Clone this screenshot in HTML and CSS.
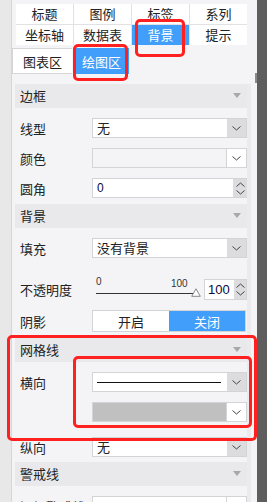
FILE: index.html
```html
<!DOCTYPE html>
<html lang="zh">
<head>
<meta charset="utf-8">
<link rel="stylesheet" href="styles.css">
</head>
<body>
<div class="app">
  <div class="panel">
    <div class="tabs">
      <div class="tab">标题</div>
      <div class="tab">图例</div>
      <div class="tab">标签</div>
      <div class="tab">系列</div>
      <div class="tab">坐标轴</div>
      <div class="tab">数据表</div>
      <div class="tab active">背景</div>
      <div class="tab">提示</div>
    </div>
    <div class="subtabs">
      <div class="subtab">图表区</div>
      <div class="subtab active">绘图区</div>
    </div>
    <div class="content">
      <div class="sections">
        <div class="sec-head">边框<span class="tri"></span></div>
        <div class="sec-body">
          <div class="row"><div class="label">线型</div>
            <div class="select"><div class="val">无</div><div class="btn"><svg width="9" height="5" viewBox="0 0 9 5"><path d="M0.5 0.5l4 3.5 4-3.5" stroke="#444" fill="none"/></svg></div></div>
          </div>
          <div class="row"><div class="label">颜色</div>
            <div class="select disabled"><div class="val"></div><div class="btn white"><svg width="9" height="5" viewBox="0 0 9 5"><path d="M0.5 0.5l4 3.5 4-3.5" stroke="#444" fill="none"/></svg></div></div>
          </div>
          <div class="row"><div class="label">圆角</div>
            <div class="num wide"><div class="val num-val">0</div><div class="spin"><svg width="9" height="5" viewBox="0 0 9 5"><path d="M0.5 4.5l4-3.5 4 3.5" stroke="#444" fill="none"/></svg><svg width="9" height="5" viewBox="0 0 9 5"><path d="M0.5 0.5l4 3.5 4-3.5" stroke="#444" fill="none"/></svg></div></div>
          </div>
        </div>
        <div class="sec-head">背景<span class="tri"></span></div>
        <div class="sec-body bg-body">
          <div class="row"><div class="label">填充</div>
            <div class="select"><div class="val">没有背景</div><div class="btn"><svg width="9" height="5" viewBox="0 0 9 5"><path d="M0.5 0.5l4 3.5 4-3.5" stroke="#444" fill="none"/></svg></div></div>
          </div>
          <div class="row opacity"><div class="label">不透明度</div>
            <div class="slider">
              <span class="s-min">0</span><span class="s-max">100</span>
              <div class="s-line"></div>
              <svg class="s-thumb" width="10" height="9" viewBox="0 0 10 9"><path d="M5 0.8L9.3 8.3H0.7Z" fill="#fff" stroke="#888"/></svg>
            </div>
            <div class="num small"><div class="val num-val big">100</div><div class="spin"><svg width="9" height="5" viewBox="0 0 9 5"><path d="M0.5 4.5l4-3.5 4 3.5" stroke="#444" fill="none"/></svg><svg width="9" height="5" viewBox="0 0 9 5"><path d="M0.5 0.5l4 3.5 4-3.5" stroke="#444" fill="none"/></svg></div></div>
          </div>
          <div class="row shadow"><div class="label">阴影</div>
            <div class="toggle"><div class="opt">开启</div><div class="opt on">关闭</div></div>
          </div>
        </div>
        <div class="sec-head">网格线<span class="tri"></span></div>
        <div class="sec-body grid-body">
          <div class="row"><div class="label">横向</div>
            <div class="select"><div class="val"><div class="linestyle"></div></div><div class="btn"><svg width="9" height="5" viewBox="0 0 9 5"><path d="M0.5 0.5l4 3.5 4-3.5" stroke="#444" fill="none"/></svg></div></div>
          </div>
          <div class="row"><div class="label"></div>
            <div class="select colorsel"><div class="val swatch"></div><div class="btn white"><svg width="9" height="5" viewBox="0 0 9 5"><path d="M0.5 0.5l4 3.5 4-3.5" stroke="#444" fill="none"/></svg></div></div>
          </div>
          <div class="row vert"><div class="label">纵向</div>
            <div class="select"><div class="val">无</div><div class="btn"><svg width="9" height="5" viewBox="0 0 9 5"><path d="M0.5 0.5l4 3.5 4-3.5" stroke="#444" fill="none"/></svg></div></div>
          </div>
        </div>
        <div class="sec-head">警戒线<span class="tri"></span></div>
        <div class="sec-body">
          <div class="row"><div class="label">添加警戒线</div>
            <div class="select"><div class="val"></div><div class="btn white"></div></div>
          </div>
        </div>
      </div>
      <div class="track"></div>
    </div>
    <div class="thumb"></div>
  </div>
  <div class="darkbar"></div>
  <div class="mark m1"></div>
  <div class="mark m2"></div>
  <div class="mark m3"></div>
  <div class="mark m4"></div>
</div>
</body>
</html>
```
FILE: styles.css
```css
html, body {
  margin: 0;
  padding: 0;
}
body {
  width: 267px;
  height: 502px;
  overflow: hidden;
  background: #e8e8e8;
  font-family: "Noto Sans CJK SC", "Liberation Sans", sans-serif;
  font-size: 13px;
  color: #222;
}
.app {
  position: relative;
  display: flex;
  height: 502px;
}
.panel {
  position: relative;
  margin-left: 11px;
  width: 245px;
  border-left: 1px solid #d6d6d8;
  background: #f4f4f6;
  overflow: hidden;
}
.darkbar {
  width: 10px;
  background: #5e5e5e;
}
.tabs {
  margin: 4px 0 0 4px;
  width: 231px;
  display: grid;
  grid-template-columns: repeat(4, 57px);
  grid-auto-rows: 20px;
  gap: 1px;
  background: #e2e2e4;
}
.tab {
  background: #fff;
  display: flex;
  align-items: center;
  justify-content: center;
  line-height: 20px;
  font-size: 13px;
}
.tab.active {
  background: #419efb;
  color: #fff;
}
.subtabs {
  display: flex;
  margin-top: 3px;
  height: 26px;
}
.subtab {
  display: flex;
  align-items: center;
  justify-content: center;
  font-size: 13px;
}
.subtab:first-child {
  width: 60px;
  background: #fff;
  border: 1px solid #d6d6d8;
  border-right: none;
  box-sizing: border-box;
}
.subtab.active {
  margin-left: 2px;
  width: 55px;
  background: #419efb;
  color: #fff;
}
.content {
  display: flex;
  margin-top: 10px;
  margin-left: 3px;
}
.sections {
  width: 232px;
}
.track {
  width: 4px;
  background: #ebebed;
}
.sec-head {
  position: relative;
  height: 24px;
  background: #e9e9eb;
  padding-left: 5px;
  line-height: 24px;
  font-size: 13px;
  color: #222;
}
.tri {
  position: absolute;
  right: 6px;
  top: 9px;
  width: 0;
  height: 0;
  border-left: 4px solid transparent;
  border-right: 4px solid transparent;
  border-top: 5px solid #a8a8aa;
}
.sec-body {
  padding: 5px 0 1px;
}
.row {
  display: flex;
  align-items: center;
  height: 30px;
}
.label {
  width: 72px;
  padding-left: 5px;
  flex: none;
  font-size: 13px;
  color: #222;
  white-space: nowrap;
}
.select, .num {
  display: flex;
  height: 20px;
  box-sizing: border-box;
  border: 1px solid #d4d4d7;
  background: #fff;
}
.select {
  width: 155px;
}
.select .val {
  flex: 1;
  padding-left: 4px;
  line-height: 18px;
  font-size: 13px;
  display: flex;
  align-items: center;
}
.select .btn {
  width: 19px;
  background: #dcdcdf;
  display: flex;
  align-items: center;
  justify-content: center;
}
.select .btn.white {
  background: #fff;
  border-left: 1px solid #d4d4d7;
}
.select.disabled {
  background: #f4f4f6;
}
.num.wide {
  width: 155px;
  border-right: none;
}
.num .val {
  flex: 1;
}
.num-val {
  padding-left: 4px;
  font-family: "Liberation Sans", sans-serif;
  font-size: 12px;
  line-height: 18px;
  color: #0a0a40;
}
.num-val.big {
  font-size: 13px;
  padding-left: 3px;
  line-height: 19px;
}
.spin {
  width: 14px;
  background: #dcdcdf;
  display: flex;
  flex-direction: column;
  align-items: center;
  justify-content: space-around;
  padding: 1px 0;
  box-sizing: border-box;
}
.opacity {
  margin-top: 16px;
  height: 21px;
}
.slider {
  position: relative;
  width: 108px;
  height: 21px;
  margin-left: 4px;
  flex: none;
}
.s-min, .s-max {
  position: absolute;
  font-family: "Liberation Sans", sans-serif;
  font-size: 10px;
  line-height: 10px;
  color: #333;
}
.s-min { left: 0; top: -2px; }
.s-max { left: 75px; top: 0; }
.s-line {
  position: absolute;
  left: 0;
  top: 14px;
  width: 98px;
  height: 1px;
  background: #333;
}
.s-thumb {
  position: absolute;
  left: 95px;
  top: 9px;
}
.num.small {
  width: 43px;
  height: 21px;
}
.num.small .spin {
  width: 12px;
}
.shadow {
  margin-top: 10px;
  height: 22px;
  margin-bottom: 5px;
}
.toggle {
  display: flex;
  width: 154px;
  height: 22px;
  box-sizing: border-box;
  border: 1px solid #d4d4d7;
  background: #fff;
}
.opt {
  flex: 1;
  display: flex;
  align-items: center;
  justify-content: center;
  font-size: 13px;
}
.opt.on {
  background: #419efb;
  color: #fff;
}
.bg-body {
  padding-bottom: 1px;
}
.grid-body {
  padding-bottom: 0;
}
.vert {
  margin-top: 5px;
}
.linestyle {
  width: 124px;
  height: 1px;
  background: #111;
}
.colorsel .val.swatch {
  background: #c0c0c0;
  padding: 0;
}
.thumb {
  position: absolute;
  left: 243px;
  top: 73px;
  width: 2px;
  height: 10px;
  background: #8a8a8a;
}
.mark {
  position: absolute;
  box-sizing: border-box;
  border: 3px solid #ff2020;
  border-radius: 5px;
}
.m1 { left: 135px; top: 19px; width: 50px; height: 38px; }
.m2 { left: 73px; top: 44px; width: 55px; height: 37px; }
.m3 { left: 7px; top: 335px; width: 250px; height: 106px; }
.m4 { left: 73px; top: 356px; width: 179px; height: 72px; }
```
